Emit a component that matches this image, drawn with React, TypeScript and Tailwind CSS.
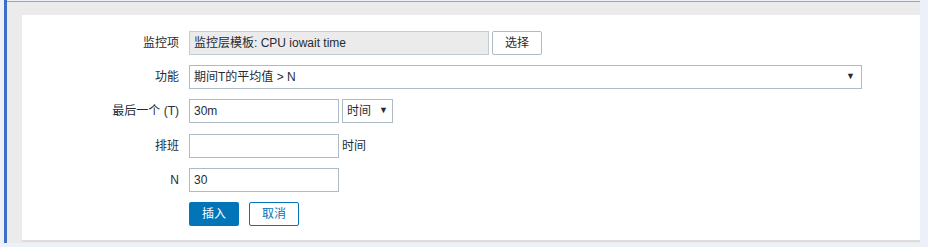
import React from "react";

const font = { fontFamily: '"Liberation Sans", "Noto Sans CJK SC", Arial, sans-serif' };

function Row({ label, children, extra = "" }: { label: string; children: React.ReactNode; extra?: string }) {
  return (
    <div className={"flex items-center h-[24px] " + extra}>
      <div className="w-[157px] text-right text-[12px] text-[#1f2c33]">{label}</div>
      <div className="ml-[10px] flex items-center">{children}</div>
    </div>
  );
}

export default function App() {
  return (
    <div className="w-[928px] h-[247px] bg-[#ecf0f8] flex" style={font}>
      <div className="ml-[4px] w-[3px] h-[243px] bg-[#3d6fc2]" />
      <div className="mt-[1px] w-[913px] h-[242px] border-t border-[#a3a3a3] bg-[#ebebeb] pt-[13px] pl-[15px] pb-[1px]">
        <div className="w-[898px] h-[227px] bg-white border-b-2 border-[#dcdcdc] pt-[16px] flex flex-col gap-[10px] text-[12px] text-[#1f2c33]">
          <Row label="监控项">
            <div className="w-[300px] h-[24px] bg-[#ebebeb] border border-[#c3ccd2] flex items-center px-[4px]">
              监控层模板: CPU iowait time
            </div>
            <div className="ml-[3px] w-[50px] h-[24px] border border-[#acbbc4] bg-white rounded-[2px] flex items-center justify-center">
              选择
            </div>
          </Row>
          <Row label="功能">
            <div className="w-[673px] h-[24px] border border-[#acbbc4] bg-white flex items-center px-[4px] justify-between">
              <span>期间T的平均值 &gt; N</span>
              <span className="text-[9px] mr-[2px]">▼</span>
            </div>
          </Row>
          <Row label="最后一个 (T)">
            <div className="w-[150px] h-[24px] border border-[#acbbc4] bg-white flex items-center px-[4px]">30m</div>
            <div className="ml-[3px] w-[51px] h-[24px] border border-[#acbbc4] bg-white flex items-center px-[4px] justify-between">
              <span>时间</span>
              <span className="text-[9px]">▼</span>
            </div>
          </Row>
          <Row label="排班" extra="mt-[1px]">
            <div className="w-[150px] h-[24px] border border-[#acbbc4] bg-white" />
            <span className="ml-[3px]">时间</span>
          </Row>
          <Row label="N">
            <div className="w-[150px] h-[24px] border border-[#acbbc4] bg-white flex items-center px-[4px]">30</div>
          </Row>
          <Row label="">
            <div className="w-[50px] h-[24px] bg-[#0275b8] text-white rounded-[2px] flex items-center justify-center">插入</div>
            <div className="ml-[10px] w-[50px] h-[24px] border border-[#0275b8] text-[#0275b8] bg-white rounded-[2px] flex items-center justify-center">取消</div>
          </Row>
        </div>
      </div>
    </div>
  );
}
